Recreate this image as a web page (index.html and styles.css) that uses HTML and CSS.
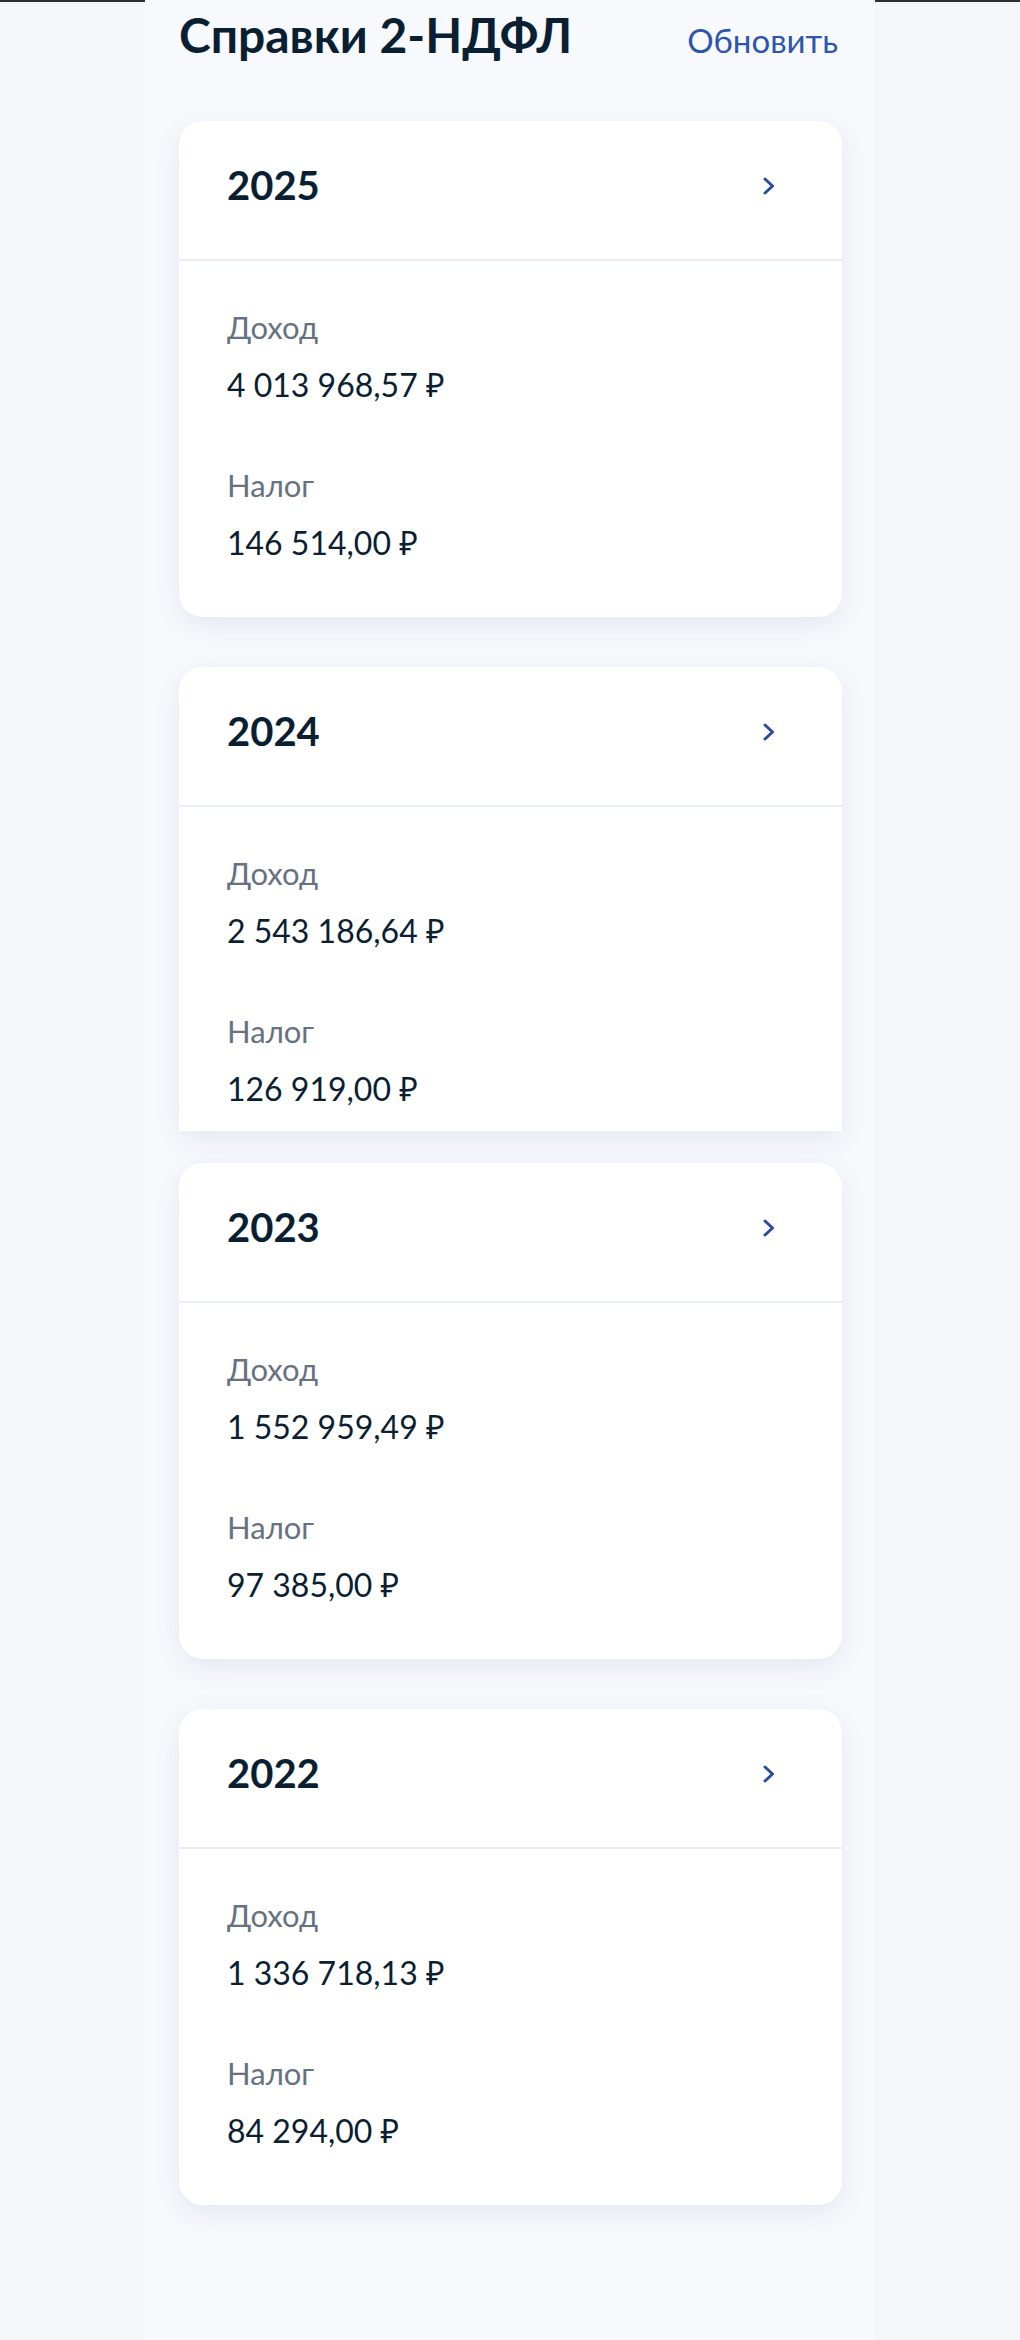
FILE: index.html
```html
<!DOCTYPE html>
<html lang="ru">
<head>
  <meta charset="UTF-8">
  <title>Справки 2-НДФЛ</title>
  <link rel="stylesheet" href="styles.css">
</head>
<body>
  <div class="topline">
    <div class="topline-edge"></div>
    <div class="topline-mid"></div>
    <div class="topline-edge"></div>
  </div>
  <div class="screen">
    <div class="header">
      <h1 class="title">Справки 2-НДФЛ</h1>
      <a class="refresh" href="#">Обновить</a>
    </div>

    <div class="card">
      <div class="card-head">
        <span class="year">2025</span>
        <svg class="chevron" width="12" height="18" viewBox="0 0 12 18"><polyline points="2,2 9.5,9 2,16" /></svg>
      </div>
      <div class="card-body">
        <div class="item">
          <div class="label">Доход</div>
          <div class="value">4 013 968,57 ₽</div>
        </div>
        <div class="item">
          <div class="label">Налог</div>
          <div class="value">146 514,00 ₽</div>
        </div>
      </div>
    </div>

    <div class="card card-cut">
      <div class="card-head">
        <span class="year">2024</span>
        <svg class="chevron" width="12" height="18" viewBox="0 0 12 18"><polyline points="2,2 9.5,9 2,16" /></svg>
      </div>
      <div class="card-body">
        <div class="item">
          <div class="label">Доход</div>
          <div class="value">2 543 186,64 ₽</div>
        </div>
        <div class="item">
          <div class="label">Налог</div>
          <div class="value">126 919,00 ₽</div>
        </div>
      </div>
    </div>

    <div class="card">
      <div class="card-head">
        <span class="year">2023</span>
        <svg class="chevron" width="12" height="18" viewBox="0 0 12 18"><polyline points="2,2 9.5,9 2,16" /></svg>
      </div>
      <div class="card-body">
        <div class="item">
          <div class="label">Доход</div>
          <div class="value">1 552 959,49 ₽</div>
        </div>
        <div class="item">
          <div class="label">Налог</div>
          <div class="value">97 385,00 ₽</div>
        </div>
      </div>
    </div>

    <div class="card">
      <div class="card-head">
        <span class="year">2022</span>
        <svg class="chevron" width="12" height="18" viewBox="0 0 12 18"><polyline points="2,2 9.5,9 2,16" /></svg>
      </div>
      <div class="card-body">
        <div class="item">
          <div class="label">Доход</div>
          <div class="value">1 336 718,13 ₽</div>
        </div>
        <div class="item">
          <div class="label">Налог</div>
          <div class="value">84 294,00 ₽</div>
        </div>
      </div>
    </div>
  </div>
</body>
</html>
```

FILE: styles.css
```css
body {
  margin: 0;
  background: #f5f6f8;
  font-family: Lato, 'Noto Sans', sans-serif;
  color: #0b1f33;
}

.topline {
  display: flex;
  justify-content: center;
  height: 2px;
}

.topline-edge {
  flex: 1;
  background: #2e2e2e;
}

.topline-mid {
  width: 730px;
  background: #f8f9fc;
}

.screen {
  width: 730px;
  min-height: 2338px;
  margin: 0 auto;
  padding: 4px 33px 0 34px;
  box-sizing: border-box;
  background: #f8f9fc;
}

.header {
  display: flex;
  justify-content: space-between;
  align-items: baseline;
  margin-bottom: 57px;
}

.title {
  margin: 0;
  font-size: 48px;
  font-weight: bold;
  line-height: 1.2;
  color: #0b1f33;
}

.refresh {
  margin-right: 4px;
  font-size: 33px;
  color: #2c55ad;
  text-decoration: none;
}

.card {
  background: #fff;
  border-radius: 24px;
  box-shadow: 0 8px 28px rgba(60, 95, 180, 0.11);
  margin-bottom: 50px;
}

.card-cut {
  border-radius: 24px 24px 0 0;
  margin-bottom: 32px;
}

.card-cut .card-body {
  padding-bottom: 20px;
}

.card-head {
  display: flex;
  justify-content: space-between;
  align-items: flex-start;
  padding: 40px 67px 50px 48px;
  border-bottom: 2px solid #e8ecf3;
}

.year {
  font-size: 40px;
  font-weight: bold;
  line-height: 48px;
}

.chevron {
  margin-top: 16px;
  fill: none;
  stroke: #2b4ba3;
  stroke-width: 3;
  stroke-linecap: round;
  stroke-linejoin: round;
}

.card-body {
  display: flex;
  flex-direction: column;
  gap: 56px;
  padding: 44px 48px 52px;
}

.item {
  display: flex;
  flex-direction: column;
  gap: 14px;
}

.label {
  font-size: 31px;
  line-height: 44px;
  color: #66727f;
}

.value {
  font-size: 32px;
  line-height: 44px;
  color: #0b1f33;
}
```
